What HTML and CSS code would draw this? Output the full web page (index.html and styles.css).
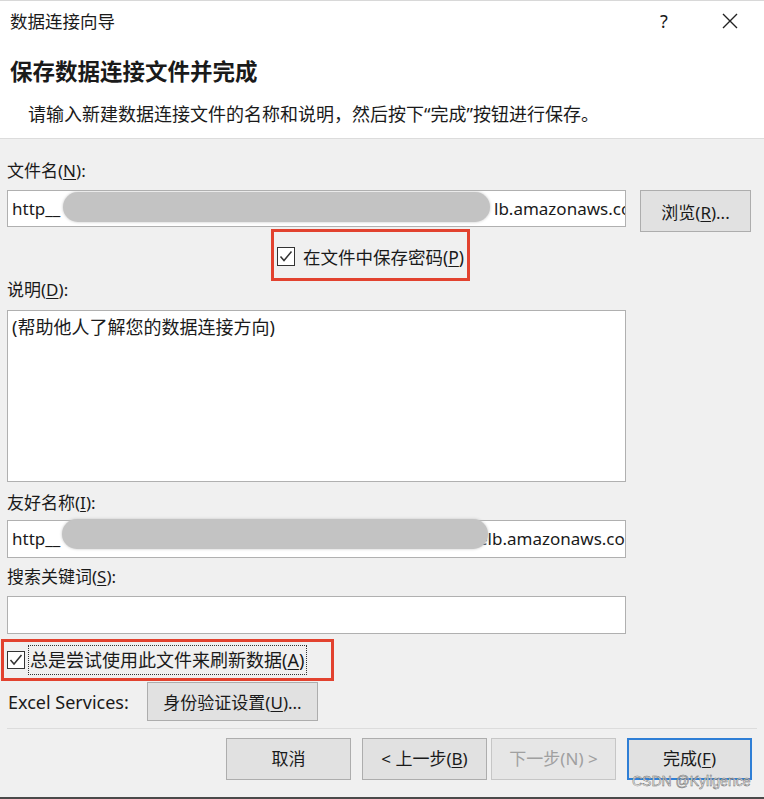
FILE: index.html
```html
<!DOCTYPE html>
<html>

<head>
    <title>数据连接向导</title>
    <link rel="stylesheet" href="styles.css">
</head>

<body>
    <div class="header">
        <div class="titlebar">
            <span class="title">数据连接向导</span>
            <span class="help">?</span>
            <span class="close">
                <svg width="16" height="16" viewBox="0 0 16 16"><path d="M1 1 L15 15 M15 1 L1 15" stroke="#222" stroke-width="1.4" fill="none"/></svg>
            </span>
        </div>
        <h1>保存数据连接文件并完成</h1>
        <p class="intro">请输入新建数据连接文件的名称和说明，然后按下“完成”按钮进行保存。</p>
    </div>

    <div class="content">
        <div class="label">文件名(<u>N</u>):</div>
        <div class="file-row">
            <div class="field">
                <span class="head">http__</span><span class="tail">lb.amazonaws.com.cn</span>
                <span class="blob"></span>
            </div>
            <button class="btn browse">浏览(<u>R</u>)...</button>
        </div>

        <div class="mark mark-pwd">
            <span class="check">
                <svg width="18" height="19" viewBox="0 0 18 19"><rect x="0.5" y="0.5" width="17" height="18" fill="#fff" stroke="#333"/><path d="M3.5 9.5 L7 13.5 L14.5 4.5" stroke="#333" stroke-width="1.5" fill="none"/></svg>
            </span>
            <span>在文件中保存密码(<u>P</u>)</span>
        </div>

        <div class="label label-desc">说明(<u>D</u>):</div>
        <div class="textarea">(帮助他人了解您的数据连接方向)</div>

        <div class="label label-friendly">友好名称(<u>I</u>):</div>
        <div class="field field-friendly">
            <span class="head head-short">http__</span><span class="tail tail-long">elb.amazonaws.com.cn</span>
            <span class="blob blob-high"></span>
        </div>

        <div class="label label-search">搜索关键词(<u>S</u>):</div>
        <div class="field field-search"></div>

        <div class="mark mark-refresh">
            <span class="check">
                <svg width="18" height="18" viewBox="0 0 18 18"><rect x="0.5" y="0.5" width="17" height="17" fill="#fff" stroke="#333"/><path d="M3.5 9 L7 13 L14.5 4" stroke="#333" stroke-width="1.5" fill="none"/></svg>
            </span>
            <span class="focus">总是尝试使用此文件来刷新数据(<u>A</u>)</span>
        </div>

        <div class="excel-row">
            <span class="excel-label">Excel Services:</span>
            <button class="btn auth">身份验证设置(<u>U</u>)...</button>
        </div>

        <div class="separator"></div>

        <div class="actions">
            <button class="btn action">取消</button>
            <button class="btn action back">&lt; 上一步(<u>B</u>)</button>
            <button class="btn action next" disabled>下一步(N) &gt;</button>
            <button class="btn action finish">完成(<u>F</u>)</button>
        </div>
    </div>

    <div class="watermark">CSDN @Kyligence</div>
</body>

</html>
```

FILE: styles.css
```css
body {
    margin: 0;
    width: 764px;
    height: 799px;
    box-sizing: border-box;
    background-color: #f0f0f0;
    border-bottom: 2px solid #4a4a4a;
    font-family: "Noto Sans", "Noto Sans CJK SC", sans-serif;
    font-size: 17px;
    color: #1a1a1a;
    position: relative;
    overflow: hidden;
}

u {
    text-underline-offset: 2px;
}

.header {
    background-color: #fff;
    height: 139px;
    box-sizing: border-box;
    border-bottom: 1px solid #dcdcdc;
    border-top: 1px solid #d8d8d8;
}

.titlebar {
    display: flex;
    align-items: center;
    padding: 8px 0 0 10px;
    height: 24px;
    line-height: 24px;
}

.title {
    flex: 1;
    font-size: 17.5px;
}

.help {
    width: 62px;
    font-size: 18px;
}

.close {
    width: 42px;
    display: flex;
    align-items: center;
}

h1 {
    margin: 24px 0 0 10px;
    font-size: 22.5px;
    line-height: 29px;
    font-weight: bold;
}

.intro {
    margin: 16px 0 0 28px;
    font-size: 18px;
    line-height: 24px;
}

.content {
    padding: 0 7px;
}

.label {
    line-height: 24px;
    margin-top: 20px;
}

.file-row {
    display: flex;
    align-items: flex-start;
    gap: 14px;
    margin-top: 7px;
}

.field {
    position: relative;
    width: 619px;
    height: 37px;
    box-sizing: border-box;
    background-color: #fff;
    border: 1px solid #b0b0b0;
    padding: 0 4px;
    line-height: 35px;
    white-space: nowrap;
    overflow: hidden;
}

.head {
    display: inline-block;
    width: 482px;
}

.head-short {
    width: 466px;
}

.tail {
    display: inline-block;
    width: 131px;
    overflow: hidden;
    vertical-align: top;
}

.tail-long {
    width: 147px;
}

.blob {
    position: absolute;
    left: 55px;
    top: 1px;
    width: 427px;
    height: 30px;
    border-radius: 15px;
    background-color: #c3c3c3;
    box-shadow: 0 0 3px #c3c3c3;
}

.field-friendly {
    height: 38px;
    margin-top: 5px;
    overflow: visible;
}

.blob-high {
    left: 54px;
    top: -2px;
    width: 426px;
}

.field-search {
    height: 38px;
    margin-top: 7px;
}

.btn {
    font-family: inherit;
    font-size: 17px;
    color: #1a1a1a;
    background-color: #e1e1e1;
    border: 1px solid #adadad;
    padding: 0;
}

.browse {
    width: 111px;
    height: 42px;
}

.mark {
    display: flex;
    align-items: center;
    box-sizing: border-box;
    border: 3px solid #e2422f;
}

.mark-pwd {
    width: 199px;
    height: 52px;
    margin: -3px 0 0 264px;
    padding: 3px 0 0 3px;
    gap: 8px;
    font-size: 17.5px;
}

.check {
    display: flex;
}

.label-desc {
    margin-top: -3px;
}

.textarea {
    height: 172px;
    margin-top: 8px;
    box-sizing: border-box;
    background-color: #fff;
    border: 1px solid #b0b0b0;
    width: 619px;
    padding: 4px 4px;
    font-size: 18px;
    line-height: 24px;
}

.label-friendly {
    margin-top: 9px;
}

.label-search {
    margin-top: 7px;
}

.mark-refresh {
    width: 333px;
    height: 42px;
    margin: 5px 0 0 -6px;
    padding: 0 0 0 3px;
    gap: 4px;
    font-size: 18px;
}

.focus {
    outline: 1px dotted #333;
    outline-offset: 0;
    line-height: 28px;
    padding: 0 2px 0 1px;
}

.excel-row {
    display: flex;
    align-items: center;
    margin-top: 1px;
}

.excel-label {
    width: 139px;
    padding-left: 1px;
    font-size: 18px;
}

.auth {
    width: 171px;
    height: 39px;
}

.separator {
    height: 1px;
    background-color: #dcdcdc;
    margin-top: 7px;
}

.actions {
    display: flex;
    justify-content: flex-end;
    margin-top: 9px;
    padding-right: 5px;
}

.action {
    width: 125px;
    height: 42px;
    margin-left: 11px;
    padding-bottom: 3px;
}

.next {
    margin-left: 4px;
    color: #a0a0a0;
    background-color: #e6e6e6;
    border-color: #c6c6c6;
}

.finish {
    border: 2px solid #2f7fd6;
}

.watermark {
    position: absolute;
    left: 632px;
    top: 773px;
    font-family: "Liberation Sans", sans-serif;
    font-size: 14px;
    line-height: 16px;
    color: #fafafa;
    -webkit-text-stroke: 0.5px #6a6a6a;
}
```
